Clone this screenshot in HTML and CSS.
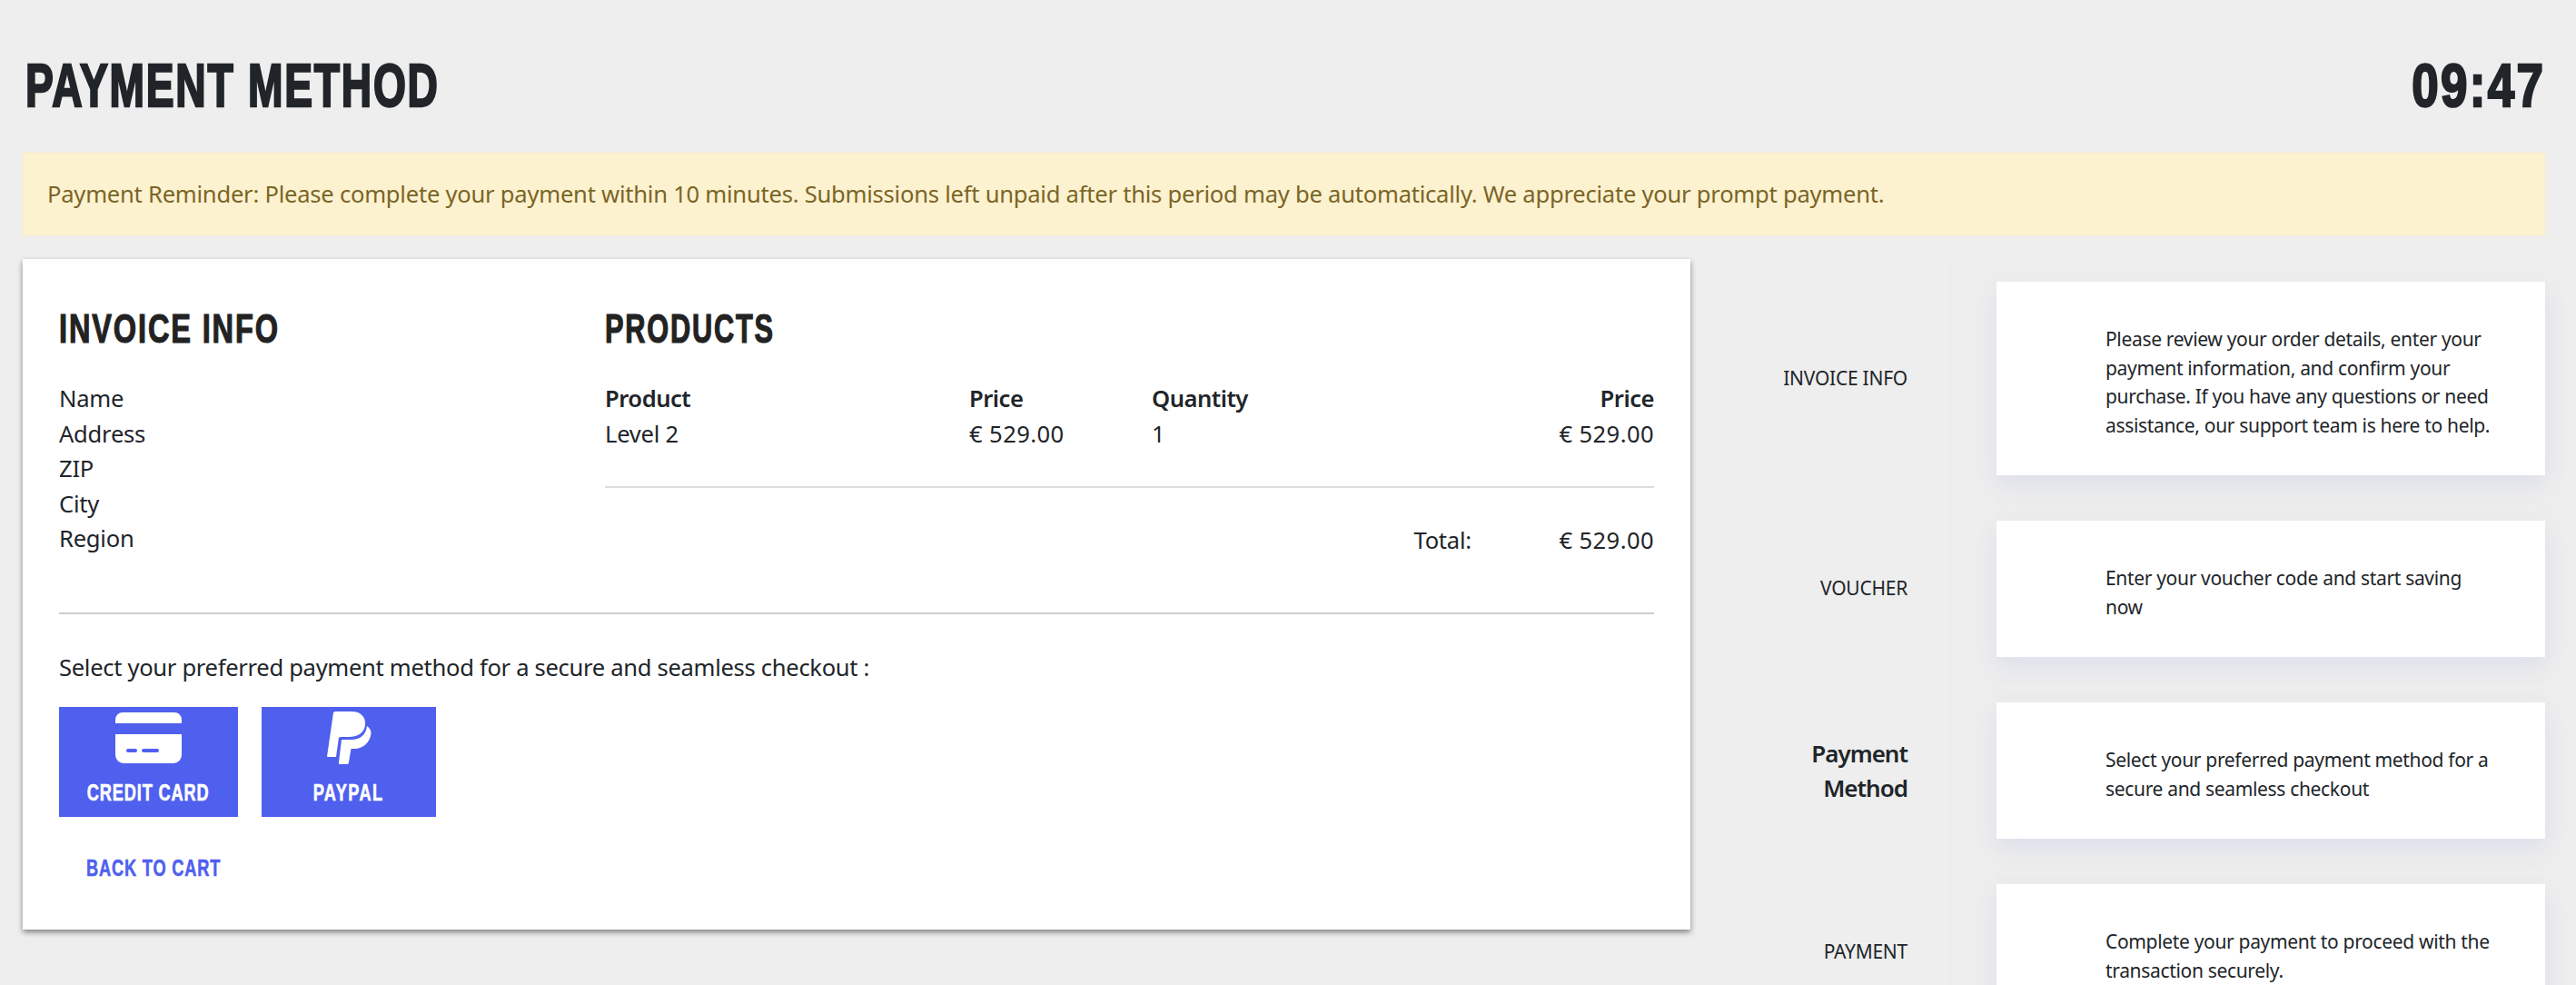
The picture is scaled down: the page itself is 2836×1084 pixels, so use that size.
FILE: index.html
```html
<!DOCTYPE html>
<html lang="en">
<head>
<meta charset="utf-8">
<title>Payment Method</title>
<link rel="stylesheet" href="styles.css">
</head>
<body>
<header class="top">
  <h1 class="title">PAYMENT METHOD</h1>
  <div class="timer">09:47</div>
</header>
<div class="alert">Payment Reminder: Please complete your payment within 10 minutes. Submissions left unpaid after this period may be automatically. We appreciate your prompt payment.</div>
<main class="main">
  <section class="panel">
    <div class="info">
      <div class="invoice">
        <h2 class="head head-inv">INVOICE INFO</h2>
        <p>Name</p><p>Address</p><p>ZIP</p><p>City</p><p>Region</p>
      </div>
      <div class="products">
        <h2 class="head head-pro">PRODUCTS</h2>
        <table class="tbl">
          <thead><tr><th>Product</th><th>Price</th><th>Quantity</th><th class="r">Price</th></tr></thead>
          <tbody><tr><td>Level 2</td><td class="money">€ 529.00</td><td>1</td><td class="r money">€ 529.00</td></tr></tbody>
        </table>
        <div class="total"><span class="total-l">Total:</span><span class="money">€ 529.00</span></div>
      </div>
    </div>
    <p class="select">Select your preferred payment method for a secure and seamless checkout :</p>
    <div class="methods">
      <a class="method m1">
        <svg class="ico" width="73" height="56" viewBox="0 0 73 56"><path fill="#fff" d="M8 0H65A8 8 0 0 1 73 8V12H0V8A8 8 0 0 1 8 0ZM0 24H73V47A9 9 0 0 1 64 56H9A9 9 0 0 1 0 47Z"/><rect x="12" y="40" width="12" height="4" rx="2" fill="#4f60ee"/><rect x="29" y="40" width="19" height="4" rx="2" fill="#4f60ee"/></svg>
        <span>CREDIT CARD</span>
      </a>
      <a class="method m2">
        <svg class="ico" width="49" height="58" viewBox="0 0 49 58"><path fill="#fff" d="M7 1.500Q7.500 0 9 0H27C37 0 43 6 42 15C41 24 33 28 24 28H15C13.500 28 13 29 12.800 30L10 50H1C.3 50 0 49.500 .1 49Z"/><path fill="#fff" d="M44 16C47 18 49 21 48.400 25C47 34 40 41 30 41H26.500L24 56C23.900 57 23 58 22 58H14C13 58 12.700 57 13 56L16 31H27C36 31 43 26 44 16Z"/></svg>
        <span>PAYPAL</span>
      </a>
    </div>
    <a class="back">BACK TO CART</a>
  </section>
  <aside class="steps">
    <div class="step"><div class="label">INVOICE INFO</div><div class="note">Please review your order details, enter your payment information, and confirm your purchase. If you have any questions or need assistance, our support team is here to help.</div></div>
    <div class="step"><div class="label">VOUCHER</div><div class="note">Enter your voucher code and start saving now</div></div>
    <div class="step"><div class="label on">Payment Method</div><div class="note">Select your preferred payment method for a secure and seamless checkout</div></div>
    <div class="step"><div class="label">PAYMENT</div><div class="note">Complete your payment to proceed with the transaction securely.</div></div>
  </aside>
</main>
</body>
</html>
```
FILE: styles.css
```css
* { box-sizing: border-box; }
html, body { margin: 0; height: 1084px; overflow: hidden; }
body { background: #eee; color: #212529; font-family: "Noto Sans", sans-serif; font-size: 25.6px; line-height: 38.6px; letter-spacing: -.25px; padding: 0 34px 0 25px; }
.title, .timer, .head, .method span, .back { font-family: "Liberation Sans", sans-serif; font-weight: 700; white-space: nowrap; }
.top { display: flex; justify-content: space-between; align-items: center; height: 168px; padding-top: 19px; }
.title { margin: 0 0 0 3px; font-size: 66px; line-height: 1; letter-spacing: 2.5px; transform: scaleX(.7); transform-origin: left center; -webkit-text-stroke: 2.5px currentColor; }
.timer { font-size: 67px; line-height: 1; letter-spacing: 3px; transform: scaleX(.79); transform-origin: right center; -webkit-text-stroke: 2.5px currentColor; }
.alert { height: 91px; display: flex; align-items: center; padding: 2px 26px 0; background: #fdf2cf; border: 1px solid #fdeebf; color: #7a6528; }
.main { display: flex; align-items: flex-start; margin-top: 26px; }
.panel { flex: none; width: 1836px; height: 738px; padding: 40px; background: #fff; box-shadow: 0 3px 6px rgba(0,0,0,.45); }
.info { display: flex; height: 351px; border-bottom: 2px solid #ccc; }
.invoice { flex: none; width: 601px; }
.products { flex: 1; }
.head { margin: 12px 0 33px; font-size: 44px; line-height: 50px; letter-spacing: 2.5px; color: #222; transform-origin: left center; -webkit-text-stroke: 1.2px currentColor; }
.head-inv { transform: scaleX(.74); }
.head-pro { transform: scaleX(.7); }
.info p { margin: 0; }
.tbl { width: 100%; border-collapse: collapse; table-layout: fixed; }
.tbl th, .tbl td { padding: 0; text-align: left; }
.tbl th { font-weight: 600; letter-spacing: -.5px; }
.tbl th:nth-child(1) { width: 401px; }
.tbl th:nth-child(2) { width: 201px; }
.tbl .r { text-align: right; }
.tbl tbody td { padding-bottom: 38px; border-bottom: 2px solid #ddd; }
.money { letter-spacing: .4px; }
.total { display: flex; justify-content: flex-end; margin-top: 39px; }
.total-l { width: 160px; }
.select { margin: 40px 0 23px; letter-spacing: -.32px; }
.methods { display: flex; gap: 26px; }
.method { display: flex; flex-direction: column; align-items: center; height: 121px; background: #4f60ee; color: #fff; }
.method span, .back { font-size: 26px; line-height: 30px; letter-spacing: 1.2px; -webkit-text-stroke: .6px currentColor; }
.method span { transform: scaleX(.7); }
.m1 { width: 197px; padding-top: 6px; }
.m1 .ico { margin-bottom: 17px; }
.m2 { width: 192px; padding-top: 5px; }
.m2 .ico { margin-bottom: 16px; }
.m2 span { letter-spacing: 2px; }
.ico { display: block; }
.back { display: block; margin: 41px 0 0 30px; color: #4f60ee; transform: scaleX(.7); transform-origin: left center; }
.steps { flex: 1; display: flex; flex-direction: column; gap: 50px; padding-top: 25px; background: linear-gradient(#ebebeb, #ebebeb) 285px 0 / 2px 100% no-repeat; }
.step { display: flex; align-items: center; }
.label { flex: none; width: 239px; margin-right: 98px; padding-left: 85px; text-align: right; font-size: 21px; line-height: 31.5px; }
.label.on { font-size: 26px; line-height: 38px; font-weight: 600; letter-spacing: -1px; }
.note { flex: none; width: 604px; padding: 48px 49px 39px 120px; background: #fff; font-size: 21px; line-height: 31.5px; letter-spacing: -.33px; box-shadow: 0 10px 24px rgba(205,210,232,.55); }
```
